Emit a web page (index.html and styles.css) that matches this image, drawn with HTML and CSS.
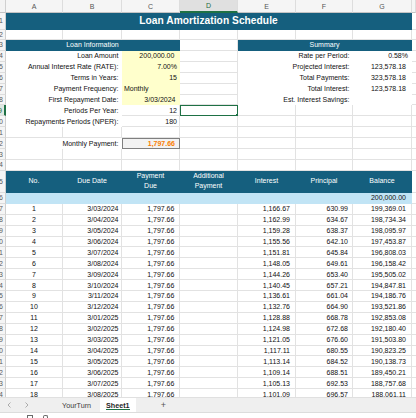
FILE: index.html
```html
<!DOCTYPE html>
<html>
<head>
<meta charset="utf-8">
<link rel="stylesheet" href="styles.css">
</head>
<body>
<div class="app">
  <div class="sheet">
    <div class="r hdr">
      <div class="corner"></div>
      <div class="ch">A</div><div class="ch">B</div><div class="ch">C</div><div class="ch sel">D</div><div class="ch">E</div><div class="ch">F</div><div class="ch">G</div><div class="ch hcol"></div>
    </div>
    <div class="r rtitle">
      <div class="rh"><span>1</span></div>
      <div class="c teal s7 ttl">Loan Amortization Schedule</div>
      <div class="c"></div>
    </div>
    <div class="r r2">
      <div class="rh"><span>2</span></div>
      <div class="c"></div><div class="c"></div><div class="c"></div><div class="c"></div><div class="c"></div><div class="c"></div><div class="c"></div><div class="c"></div>
    </div>
    <div class="r">
      <div class="rh"><span>3</span></div>
      <div class="c teal s3 ct">Loan Information</div>
      <div class="c"></div>
      <div class="c teal s3 ct">Summary</div>
      <div class="c"></div>
    </div>
    <div class="r">
      <div class="rh"><span>4</span></div>
      <div class="c lb s2">Loan Amount</div>
      <div class="c y rt a">200,000.00</div>
      <div class="c"></div>
      <div class="c lb s2">Rate per Period:</div>
      <div class="c w rt n">0.58%</div>
      <div class="c"></div>
    </div>
    <div class="r">
      <div class="rh"><span>5</span></div>
      <div class="c lb s2">Annual Interest Rate (RATE):</div>
      <div class="c y rt">7.00%</div>
      <div class="c"></div>
      <div class="c lb s2">Projected Interest:</div>
      <div class="c w rt ag">123,578.18</div>
      <div class="c"></div>
    </div>
    <div class="r">
      <div class="rh"><span>6</span></div>
      <div class="c lb s2">Terms in Years:</div>
      <div class="c y rt">15</div>
      <div class="c"></div>
      <div class="c lb s2">Total Payments:</div>
      <div class="c w rt ag">323,578.18</div>
      <div class="c"></div>
    </div>
    <div class="r">
      <div class="rh"><span>7</span></div>
      <div class="c lb s2">Payment Frequency:</div>
      <div class="c y lt">Monthly</div>
      <div class="c"></div>
      <div class="c lb s2">Total Interest:</div>
      <div class="c w rt ag">123,578.18</div>
      <div class="c"></div>
    </div>
    <div class="r">
      <div class="rh"><span>8</span></div>
      <div class="c lb s2">First Repayment Date:</div>
      <div class="c y rt dt">3/03/2024</div>
      <div class="c"></div>
      <div class="c lb s2">Est. Interest Savings:</div>
      <div class="c w"></div>
      <div class="c"></div>
    </div>
    <div class="r">
      <div class="rh sel"><span>9</span></div>
      <div class="c lb s2">Periods Per Year:</div>
      <div class="c rt">12</div>
      <div class="c active"></div>
      <div class="c"></div><div class="c"></div><div class="c"></div><div class="c"></div>
    </div>
    <div class="r">
      <div class="rh"><span>10</span></div>
      <div class="c lb s2">Repayments Periods (NPER):</div>
      <div class="c rt">180</div>
      <div class="c"></div><div class="c"></div><div class="c"></div><div class="c"></div><div class="c"></div>
    </div>
    <div class="r">
      <div class="rh"><span>11</span></div>
      <div class="c"></div><div class="c"></div><div class="c"></div><div class="c"></div><div class="c"></div><div class="c"></div><div class="c"></div><div class="c"></div>
    </div>
    <div class="r">
      <div class="rh"><span>12</span></div>
      <div class="c lb s2">Monthly Payment:</div>
      <div class="c calc">1,797.66</div>
      <div class="c"></div><div class="c"></div><div class="c"></div><div class="c"></div><div class="c"></div>
    </div>
    <div class="r">
      <div class="rh"><span>13</span></div>
      <div class="c"></div><div class="c"></div><div class="c"></div><div class="c"></div><div class="c"></div><div class="c"></div><div class="c"></div><div class="c"></div>
    </div>
    <div class="r">
      <div class="rh"><span>14</span></div>
      <div class="c"></div><div class="c"></div><div class="c"></div><div class="c"></div><div class="c"></div><div class="c"></div><div class="c"></div><div class="c"></div>
    </div>
    <div class="r rth">
      <div class="rh"><span>15</span></div>
      <div class="c teal th">No.</div>
      <div class="c teal th">Due Date</div>
      <div class="c teal th">Payment<br>Due</div>
      <div class="c teal th">Additional<br>Payment</div>
      <div class="c teal th">Interest</div>
      <div class="c teal th">Principal</div>
      <div class="c teal th">Balance</div>
      <div class="c"></div>
    </div>
    <div class="r">
      <div class="rh"><span>16</span></div>
      <div class="c blue s6"></div>
      <div class="c blue rt ag">200,000.00</div>
      <div class="c"></div>
    </div>

    <div class="r"><div class="rh"><span>17</span></div><div class="c ct">1</div><div class="c rt dd">3/03/2024</div><div class="c rt a">1,797.66</div><div class="c"></div><div class="c rt ae">1,166.67</div><div class="c rt af">630.99</div><div class="c rt ag">199,369.01</div><div class="c"></div></div>
    <div class="r"><div class="rh"><span>18</span></div><div class="c ct">2</div><div class="c rt dd">3/04/2024</div><div class="c rt a">1,797.66</div><div class="c"></div><div class="c rt ae">1,162.99</div><div class="c rt af">634.67</div><div class="c rt ag">198,734.34</div><div class="c"></div></div>
    <div class="r"><div class="rh"><span>19</span></div><div class="c ct">3</div><div class="c rt dd">3/05/2024</div><div class="c rt a">1,797.66</div><div class="c"></div><div class="c rt ae">1,159.28</div><div class="c rt af">638.37</div><div class="c rt ag">198,095.97</div><div class="c"></div></div>
    <div class="r"><div class="rh"><span>20</span></div><div class="c ct">4</div><div class="c rt dd">3/06/2024</div><div class="c rt a">1,797.66</div><div class="c"></div><div class="c rt ae">1,155.56</div><div class="c rt af">642.10</div><div class="c rt ag">197,453.87</div><div class="c"></div></div>
    <div class="r"><div class="rh"><span>21</span></div><div class="c ct">5</div><div class="c rt dd">3/07/2024</div><div class="c rt a">1,797.66</div><div class="c"></div><div class="c rt ae">1,151.81</div><div class="c rt af">645.84</div><div class="c rt ag">196,808.03</div><div class="c"></div></div>
    <div class="r"><div class="rh"><span>22</span></div><div class="c ct">6</div><div class="c rt dd">3/08/2024</div><div class="c rt a">1,797.66</div><div class="c"></div><div class="c rt ae">1,148.05</div><div class="c rt af">649.61</div><div class="c rt ag">196,158.42</div><div class="c"></div></div>
    <div class="r"><div class="rh"><span>23</span></div><div class="c ct">7</div><div class="c rt dd">3/09/2024</div><div class="c rt a">1,797.66</div><div class="c"></div><div class="c rt ae">1,144.26</div><div class="c rt af">653.40</div><div class="c rt ag">195,505.02</div><div class="c"></div></div>
    <div class="r"><div class="rh"><span>24</span></div><div class="c ct">8</div><div class="c rt dd">3/10/2024</div><div class="c rt a">1,797.66</div><div class="c"></div><div class="c rt ae">1,140.45</div><div class="c rt af">657.21</div><div class="c rt ag">194,847.81</div><div class="c"></div></div>
    <div class="r"><div class="rh"><span>25</span></div><div class="c ct">9</div><div class="c rt dd">3/11/2024</div><div class="c rt a">1,797.66</div><div class="c"></div><div class="c rt ae">1,136.61</div><div class="c rt af">661.04</div><div class="c rt ag">194,186.76</div><div class="c"></div></div>
    <div class="r"><div class="rh"><span>26</span></div><div class="c ct">10</div><div class="c rt dd">3/12/2024</div><div class="c rt a">1,797.66</div><div class="c"></div><div class="c rt ae">1,132.76</div><div class="c rt af">664.90</div><div class="c rt ag">193,521.86</div><div class="c"></div></div>
    <div class="r"><div class="rh"><span>27</span></div><div class="c ct">11</div><div class="c rt dd">3/01/2025</div><div class="c rt a">1,797.66</div><div class="c"></div><div class="c rt ae">1,128.88</div><div class="c rt af">668.78</div><div class="c rt ag">192,853.08</div><div class="c"></div></div>
    <div class="r"><div class="rh"><span>28</span></div><div class="c ct">12</div><div class="c rt dd">3/02/2025</div><div class="c rt a">1,797.66</div><div class="c"></div><div class="c rt ae">1,124.98</div><div class="c rt af">672.68</div><div class="c rt ag">192,180.40</div><div class="c"></div></div>
    <div class="r"><div class="rh"><span>29</span></div><div class="c ct">13</div><div class="c rt dd">3/03/2025</div><div class="c rt a">1,797.66</div><div class="c"></div><div class="c rt ae">1,121.05</div><div class="c rt af">676.60</div><div class="c rt ag">191,503.80</div><div class="c"></div></div>
    <div class="r"><div class="rh"><span>30</span></div><div class="c ct">14</div><div class="c rt dd">3/04/2025</div><div class="c rt a">1,797.66</div><div class="c"></div><div class="c rt ae">1,117.11</div><div class="c rt af">680.55</div><div class="c rt ag">190,823.25</div><div class="c"></div></div>
    <div class="r"><div class="rh"><span>31</span></div><div class="c ct">15</div><div class="c rt dd">3/05/2025</div><div class="c rt a">1,797.66</div><div class="c"></div><div class="c rt ae">1,113.14</div><div class="c rt af">684.52</div><div class="c rt ag">190,138.73</div><div class="c"></div></div>
    <div class="r"><div class="rh"><span>32</span></div><div class="c ct">16</div><div class="c rt dd">3/06/2025</div><div class="c rt a">1,797.66</div><div class="c"></div><div class="c rt ae">1,109.14</div><div class="c rt af">688.51</div><div class="c rt ag">189,450.21</div><div class="c"></div></div>
    <div class="r"><div class="rh"><span>33</span></div><div class="c ct">17</div><div class="c rt dd">3/07/2025</div><div class="c rt a">1,797.66</div><div class="c"></div><div class="c rt ae">1,105.13</div><div class="c rt af">692.53</div><div class="c rt ag">188,757.68</div><div class="c"></div></div>
    <div class="r"><div class="rh"><span>34</span></div><div class="c ct">18</div><div class="c rt dd">3/08/2025</div><div class="c rt a">1,797.66</div><div class="c"></div><div class="c rt ae">1,101.09</div><div class="c rt af">696.57</div><div class="c rt ag">188,061.11</div><div class="c"></div></div>
  </div>

  <div class="tabs">
    <span class="nav"><svg width="4" height="6" viewBox="0 0 4 6"><path d="M3.5 0.5 L1 3 L3.5 5.5" fill="none" stroke="#9a9a9a" stroke-width="0.8"/></svg></span>
    <span class="nav nav2"><svg width="4" height="6" viewBox="0 0 4 6"><path d="M0.5 0.5 L3 3 L0.5 5.5" fill="none" stroke="#9a9a9a" stroke-width="0.8"/></svg></span>
    <span class="tab">YourTurn</span>
    <span class="tab cur">Sheet1</span>
    <span class="plus">+</span>
  </div>
  <div class="status">
    <span class="ico ico1"></span>
    <span class="ico ico2"></span>
  </div>
</div>
</body>
</html>
```

FILE: styles.css
```css
* {
  box-sizing: border-box;
  margin: 0;
  padding: 0;
}

html, body {
  width: 416px;
  height: 418px;
  overflow: hidden;
  background: #ffffff;
}

body {
  font-family: "Liberation Sans", Arial, sans-serif;
  font-size: 7px;
  color: #111111;
}

.app {
  display: flex;
  flex-direction: column;
  height: 418px;
}

.sheet {
  height: 397px;
  flex: none;
  overflow: hidden;
}

.r {
  display: grid;
  grid-template-columns: 6px 57px 59px 58px 58px 58px 57px 59px 1fr;
  height: 10.92px;
}

.hdr { height: 13px; }
.rtitle { height: 16.5px; }
.r2 { height: 10.5px; }
.rth { height: 22px; }

.corner {
  background: #f3f3f3;
  border-right: 1px solid #d0d0d0;
  border-bottom: 1px solid #c4c4c4;
}

.ch {
  background: #f5f5f5;
  border-right: 1px solid #dddddd;
  border-bottom: 1px solid #c4c4c4;
  color: #555555;
  font-size: 7px;
  display: flex;
  align-items: center;
  justify-content: center;
}

.ch.sel {
  background: #e0e0e0;
  color: #1e6b41;
  border-bottom: 2px solid #1e7145;
}

.rh {
  background: #f5f5f5;
  border-right: 1px solid #cfcfcf;
  border-bottom: 1px solid #dddddd;
  color: #5c5c5c;
  font-size: 7px;
  display: flex;
  align-items: center;
  justify-content: flex-end;
  padding-right: 2px;
  overflow: hidden;
  white-space: nowrap;
}

.rh.sel {
  background: #dfe8e2;
  color: #1e6b41;
  border-right: 2px solid #1e7145;
}

.c {
  border-right: 1px solid #e2e2e2;
  border-bottom: 1px solid #e2e2e2;
  display: flex;
  align-items: center;
  padding: 0 2px;
  white-space: nowrap;
  overflow: hidden;
  min-width: 0;
}

.s2 { grid-column: span 2; }
.s3 { grid-column: span 3; }
.s6 { grid-column: span 6; }
.s7 { grid-column: span 7; }

.rt { justify-content: flex-end; }
.ct { justify-content: center; }
.lt { justify-content: flex-start; }

.teal {
  background: #155f7e;
  color: #ffffff;
  border-color: #155f7e;
}

.ttl {
  justify-content: center;
  font-weight: bold;
  font-size: 10.2px;
  letter-spacing: 0.05px;
}

.lb {
  justify-content: flex-end;
  padding-right: 2.6px;
  border-color: transparent;
  background: #ffffff;
}

.w {
  border-color: transparent;
  background: #ffffff;
}

.y {
  background: #ffffcc;
  border-color: transparent;
  padding-right: 2px;
}

.dt { padding-right: 3.5px; }
.n { padding-right: 3px; }
.a { padding-right: 4.6px; }
.ae { padding-right: 5px; }
.af { padding-right: 4px; }
.ag { padding-right: 5px; }
.dd { padding-right: 2.5px; }

.calc {
  background: #f2f2f2;
  border: 1px solid #7f7f7f;
  color: #fa7d00;
  font-weight: bold;
  justify-content: flex-end;
  padding-right: 4px;
}

.active {
  position: relative;
  border: 1.5px solid #1e7145;
}

.active::after {
  content: "";
  position: absolute;
  right: -2.5px;
  bottom: -2.5px;
  width: 3px;
  height: 3px;
  background: #1e7145;
  border: 0.5px solid #ffffff;
}

.th {
  justify-content: center;
  text-align: center;
  line-height: 10px;
  border-color: #155f7e;
}

.blue {
  background: #c1e4f5;
  border-color: #c1e4f5;
}

.tabs {
  height: 15px;
  flex: none;
  background: #efefef;
  border-top: 1px solid #e0e0e0;
  display: flex;
  align-items: stretch;
  font-size: 7.2px;
  color: #3c3c3c;
}

.nav {
  display: flex;
  align-items: center;
  margin-left: 7px;
  width: 4px;
}

.nav2 { margin-left: 14px; }

.tab {
  display: flex;
  align-items: center;
  padding: 0 6px;
}

.nav2 + .tab { margin-left: 27px; }

.tab.cur {
  background: #ffffff;
  font-weight: bold;
  color: #1f1f1f;
  margin-left: 3px;
  position: relative;
}

.tab.cur::after {
  content: "";
  position: absolute;
  left: 6px;
  right: 6px;
  bottom: 2px;
  height: 1px;
  background: #1e7145;
}

.plus {
  display: flex;
  align-items: center;
  margin-left: 25px;
  font-size: 9px;
  color: #555555;
}

.status {
  flex: 1;
  background: #ffffff;
  border-top: 1px solid #dcdcdc;
  position: relative;
}

.ico {
  position: absolute;
  top: 2px;
  height: 4px;
  border: 1px solid #6a6a6a;
  border-bottom: none;
}

.ico1 { left: 27px; width: 6px; }
.ico2 { left: 43px; width: 5px; border-radius: 2px 2px 0 0; }
```
